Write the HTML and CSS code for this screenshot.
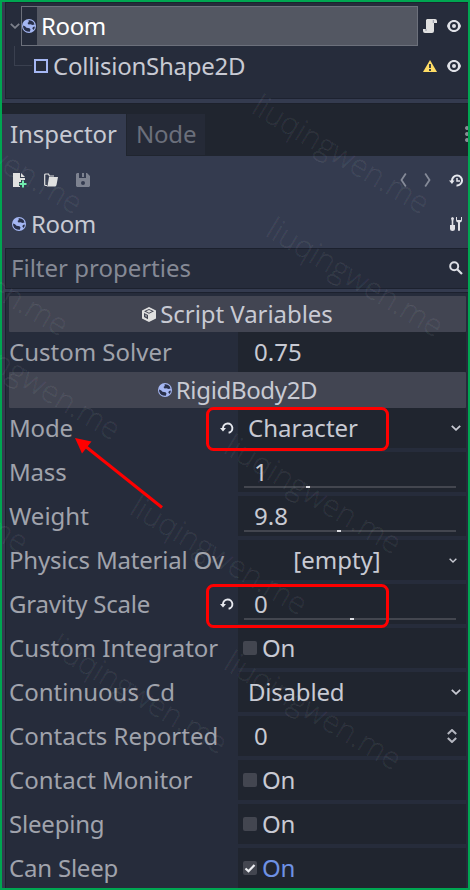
FILE: index.html
```html
<!DOCTYPE html>
<html lang="en">
<head>
<meta charset="utf-8">
<title>Inspector</title>
<link rel="stylesheet" href="styles.css">
</head>
<body>
<svg class="defs" width="0" height="0">
  <symbol id="body" viewBox="0 0 14 14"><circle cx="7" cy="7" r="7" fill="#a5b7f3"/><path d="M6.500 1.200Q9.500.8 11.500 3L12.600 5.500 10.500 6 8.500 5.200 6.500 5.600 5.500 4 6.800 3ZM1 6.500L3 7.200 4.500 8.800 7.500 9.200 8.500 10.500 7.800 12.800Q2.500 13 1.200 8.500ZM12.900 7.500Q12.800 9.500 11.500 11L10.300 9.600 11 8Z" fill="#29304a"/></symbol>
  <symbol id="eye" viewBox="0 0 14 12"><path fill-rule="evenodd" d="M7 0C3.500 0 1 2.500 0 6c1 3.500 3.500 6 7 6s6-2.500 7-6C13 2.500 10.500 0 7 0ZM7 2a4 4 0 1 1 0 8 4 4 0 0 1 0-8ZM7 4a2 2 0 1 0 0 4 2 2 0 0 0 0-4Z" fill="#e0e2e8"/></symbol>
  <symbol id="chev" viewBox="0 0 10 6"><path d="M.8.8 5 4.800 9.200.8" fill="none" stroke="currentColor" stroke-width="1.800"/></symbol>
  <symbol id="revert" viewBox="0 0 14 14"><path d="M3 8V6.800A4.700 4.700 0 1 1 8.600 11.800" fill="none" stroke="#e6e8ee" stroke-width="1.900"/><path d="M0 7h6L3 10.500Z" fill="#e6e8ee"/></symbol>
</svg>
<div class="window">
  <section class="scene">
    <div class="tree">
      <div class="node">
        <svg class="fold" width="10" height="6"><use href="#chev"/></svg>
        <div class="selected"><span class="iconcell"><svg width="14" height="14"><use href="#body"/></svg></span><span class="nodename">Room</span></div>
        <svg class="script" width="14" height="14" viewBox="0 0 14 14"><path d="M4 0h8a2 2 0 0 1 2 2v2h-3v8a2 2 0 0 1-2 2H2a2 2 0 0 1-2-2v-2h3V1Z" fill="#e0e0e0"/><path d="M3 10v2M10.300 1v3" stroke="#9297a3" stroke-width="1"/></svg>
        <svg class="eye" width="14" height="12"><use href="#eye"/></svg>
      </div>
      <div class="node child">
        <span class="branch"></span>
        <svg class="shape" width="14" height="14" viewBox="0 0 14 14"><path d="M1 1h12v12H1Z" fill="none" stroke="#a5b7f3" stroke-width="2"/></svg>
        <span class="childname">CollisionShape2D</span>
        <svg class="warn" width="14" height="12" viewBox="0 0 14 12"><path d="M7 0 14 12H0Z" fill="#ffdd65"/><path d="M7 4v4M7 9v2" stroke="#293042" stroke-width="1.800"/></svg>
        <svg class="eye" width="14" height="12"><use href="#eye"/></svg>
      </div>
    </div>
  </section>

  <nav class="tabs">
    <span class="tab active">Inspector</span><span class="tab">Node</span>
    <svg class="dots" width="3" height="16" viewBox="0 0 3 16"><path d="M0 2a2 2 0 0 1 3-1.700v3.400A2 2 0 0 1 0 2M0 8a2 2 0 0 1 3-1.700v3.400A2 2 0 0 1 0 8M0 14a2 2 0 0 1 3-1.700v3.400A2 2 0 0 1 0 14" fill="#888c96"/></svg>
  </nav>

  <section class="inspector">
    <div class="toolbar">
      <svg width="14" height="15" viewBox="0 0 14 15"><path d="M0 0h7v5h5v2H8v2H6v4h1v1H0ZM8 0l4 4H8Z" fill="#e0e0e0"/><path d="M10 7.500v7M6.500 11h7" stroke="#72edb0" stroke-width="2"/></svg>
      <svg class="open" width="14" height="14" viewBox="0 0 14 14"><path d="M3 12.500H1.500Q.7 12.500.7 11.500V2Q.7 1 1.700 1H4.500l1 2H10" fill="none" stroke="#e0e0e0" stroke-width="1.200"/><path d="M5 4H14l-1.500 8q-.3 1.500-2 1.500H2.500q1 0 1.300-2Z" fill="#e0e0e0"/></svg>
      <svg class="save" width="14" height="14" viewBox="0 0 14 14"><path fill-rule="evenodd" d="M1 0h2v5h7V0h1l3 3v10l-1 1H1l-1-1V1ZM7 8a2 2 0 1 0 0 4 2 2 0 0 0 0-4ZM6 0h2v4H6Z" fill="#7d8290"/></svg>
      <span class="spacer"></span>
      <svg class="prev" width="7" height="14" viewBox="0 0 7 14"><path d="M5.800.5 1.500 7l4.300 6.500" fill="none" stroke="#858a98" stroke-width="1.800"/></svg>
      <svg class="next" width="7" height="14" viewBox="0 0 7 14"><path d="M1.200.5 5.500 7l-4.300 6.500" fill="none" stroke="#858a98" stroke-width="1.800"/></svg>
      <svg width="14" height="13" viewBox="0 0 14 13"><path d="M3 8V6.500A5 5 0 1 1 7.500 11.500" fill="none" stroke="#e6e8ee" stroke-width="2"/><path d="M0 6.500h5.500L3 10Z" fill="#e6e8ee"/><path d="M8 4v3h3" fill="none" stroke="#e6e8ee" stroke-width="1.500"/></svg>
    </div>
    <div class="object">
      <svg width="14" height="14"><use href="#body"/></svg><span>Room</span><i class="spacer"></i>
      <svg class="tools" width="12" height="14" viewBox="0 0 12 14"><path d="M2.500 0 4 1 3.300 4v4H5v4q0 2-2.500 2T0 12V8h1.700V4L1 1ZM6 0v3q0 2 2 2.500V13q0 1 1 1t1-1V5.500q2-.5 2-2.500V0h-1v3H7V0Z" fill="#e0e0e6"/></svg>
    </div>
    <div class="filter"><span>Filter properties</span><svg width="14" height="14" viewBox="0 0 14 14"><circle cx="5.200" cy="5.200" r="4" fill="none" stroke="#dcdee4" stroke-width="2"/><path d="m8 8 5 5" stroke="#dcdee4" stroke-width="2.200"/></svg></div>
    <div class="properties">
      <h2><svg width="14" height="15" viewBox="0 0 14 15"><path d="M7 0 14 3.500v8L7 15 0 11.500v-8Z" fill="#e0e0e0"/><path d="M2 4.300 7 6.800l5-2.500L7 2Z" fill="#424552"/><path d="M4 4.300 7 3l3 1.300-3 1.400Z" fill="#e0e0e0"/><path d="M2 6v4l4 2.200V8Z" fill="#424552"/><path d="M3.200 7.500v1.800l1.600.9V8.300Z" fill="#9fa1a8"/></svg>Script Variables</h2>
      <div class="row"><label>Custom Solver</label><div class="value num">0.75</div></div>
      <h2 class="tight"><svg width="14" height="14"><use href="#body"/></svg>RigidBody2D</h2>
      <div class="grid">
        <div class="row"><label class="tight">Mode</label><svg class="revert" width="14" height="14"><use href="#revert"/></svg><div class="value pick">Character<svg width="10" height="6"><use href="#chev"/></svg></div></div>
        <div class="row"><label class="tight">Mass</label><div class="value num">1<div class="slider"><i style="margin-left:62px"></i></div></div></div>
        <div class="row"><label>Weight</label><div class="value num">9.8<div class="slider"><i style="margin-left:93px"></i></div></div></div>
        <div class="row"><label class="tight">Physics Material Ov</label><div class="value resource"><span>[empty]</span><svg width="8" height="5"><use href="#chev"/></svg></div></div>
        <div class="row"><label class="tight">Gravity Scale</label><svg class="revert" width="14" height="14"><use href="#revert"/></svg><div class="value num">0<div class="slider"><i style="margin-left:106px"></i></div></div></div>
        <div class="row"><label>Custom Integrator</label><div class="value check"><b></b>On</div></div>
        <div class="row"><label>Continuous Cd</label><div class="value pick tight">Disabled<svg width="10" height="6"><use href="#chev"/></svg></div></div>
        <div class="row"><label>Contacts Reported</label><div class="value num spin">0<svg width="10" height="14" viewBox="0 0 10 14"><path d="m.8 5 4.200-4 4.200 4M.8 9 5 13l4.200-4" fill="none" stroke="#b4b7c0" stroke-width="2"/></svg></div></div>
        <div class="row"><label>Contact Monitor</label><div class="value check"><b></b>On</div></div>
        <div class="row"><label class="tight">Sleeping</label><div class="value check"><b></b>On</div></div>
        <div class="row"><label class="tight">Can Sleep</label><div class="value check on"><b><svg width="14" height="14" viewBox="0 0 14 14"><path d="m2.500 7.500 3 2.700L11.500 4" fill="none" stroke="#eceef2" stroke-width="2.200"/></svg></b>On</div></div>
      </div>
    </div>
  </section>
</div>
<svg class="overlay" width="470" height="890" viewBox="0 0 470 890">
  <g class="watermark">
    <text transform="translate(250 112) rotate(31)">liuqingwen.me</text>
    <text transform="translate(264 235) rotate(31)">liuqingwen.me</text>
    <text transform="translate(-97 112) rotate(31)">liuqingwen.me</text>
    <text transform="translate(-111 234) rotate(31)">liuqingwen.me</text>
    <text transform="translate(-59 338) rotate(31)">liuqingwen.me</text>
    <text transform="translate(-151 451) rotate(31)">liuqingwen.me</text>
    <text transform="translate(128 513) rotate(31)">liuqingwen.me</text>
    <text transform="translate(222 452) rotate(31)">liuqingwen.me</text>
    <text transform="translate(48 652) rotate(31)">liuqingwen.me</text>
    <text transform="translate(222 668) rotate(31)">liuqingwen.me</text>
  </g>
  <g class="marks">
    <rect x="207.500" y="408.500" width="180" height="41" rx="6"/>
    <rect x="207.500" y="585.500" width="180" height="41" rx="6"/>
    <path d="M162 507.500 85 446"/>
    <path class="head" d="m75 438 16.500 3.500-9.500 12Z"/>
  </g>
</svg>
</body>
</html>
```
FILE: styles.css
```css
* { box-sizing: border-box; }
body { margin: 0; background: #343b4f; color: #c8cad3; font: 24px/40px "Noto Sans", sans-serif; }
svg { display: block; flex: none; }
.defs { position: absolute; }
.window { width: 470px; height: 890px; border: 2px solid #00a651; overflow: hidden; display: flex; flex-direction: column; }
.tight { letter-spacing: -.2px; }

.scene { height: 102px; padding: 0 0 4px 3px; background: #343b4f; border-bottom: 1px solid #1d212c; }
.tree { height: 97px; padding-top: 3px; background: #262c3b; border: solid #1d2230; border-width: 1px 0 1px 1px; }
.node { height: 40px; display: flex; align-items: center; }
.fold { margin-left: 4px; color: #7d818c; }
.selected { width: 397px; height: 40px; margin-left: 1px; border: 1px solid #6c707b; background: #535762; display: flex; line-height: 38px; color: #fff; letter-spacing: -.4px; }
.iconcell { width: 15px; background: #262c3b; display: flex; align-items: center; }
.nodename { margin-left: 4px; }
.script { margin-left: 5px; }
.node .eye { margin-left: 10px; }
.branch { width: 18px; height: 20px; margin: -20px 0 0 8px; border: solid #3a404f; border-width: 0 0 1px 1px; }
.shape { margin-left: 2px; }
.childname { margin-left: 5px; width: 370px; letter-spacing: -.25px; }
.child .eye { margin-left: 10px; }

.tabs { height: 52px; flex: none; padding-top: 10px; background: #20252f; display: flex; }
.tab { width: 78px; height: 41px; margin-left: 1px; padding-left: 9px; background: #252a37; color: #6b6f7b; line-height: 40px; letter-spacing: -.2px; }
.tab.active { width: 124px; height: 42px; margin-left: 0; padding-left: 8px; background: #343b4f; color: #c8cad3; letter-spacing: -.05px; }
.dots { margin: 12px 0 0 auto; }

.inspector { flex: 1; min-height: 0; }
.spacer { flex: 1; }
.toolbar { height: 48px; padding: 0 5px 0 11px; display: flex; align-items: center; }
.open { margin-left: 17px; }
.save { margin-left: 18px; }
.prev { margin-right: 17px; }
.next { margin-right: 18px; }
.object { height: 40px; padding: 0 6px 0 10px; display: flex; align-items: center; }
.object span { margin-left: 5px; letter-spacing: -.4px; }
.filter { height: 41px; margin: 4px 0 3px 3px; padding: 0 5px 2px 5px; background: #262c3b; border: solid #1c212e; border-width: 1px 0 1px 1px; display: flex; align-items: center; justify-content: space-between; color: #858995; }
.properties { height: 600px; margin-left: 3px; padding: 3px 2px 0 3px; background: #262c3b; border: solid #1c212e; border-width: 1px 0 0 1px; }
h2 { height: 36px; margin: 0; background: #424552; border-radius: 1px; font: 24px/36px "Noto Sans", sans-serif; letter-spacing: -.05px; display: flex; align-items: center; justify-content: center; gap: 4px; }
h2.tight { letter-spacing: -.34px; }
.row { height: 40px; display: flex; align-items: center; color: #a0a3ac; }
.row label { width: 218px; white-space: nowrap; overflow: hidden; }
.grid { display: grid; gap: 4px; }
.value { width: 228px; height: 40px; margin-left: auto; background: #20252f; color: #c8cad3; display: flex; align-items: center; position: relative; }
.revert { margin-left: -7px; }
.num { padding-left: 16px; }
.pick { padding: 0 5px 0 10px; justify-content: space-between; }
.resource { padding-right: 9px; }
.resource span { flex: 1; text-align: center; padding-right: 13px; }
.slider { position: absolute; left: 6px; bottom: 4px; width: 212px; height: 2px; background: #43464f; }
.slider i { display: block; width: 4px; height: 2px; background: #dcdde2; }
.spin { justify-content: space-between; padding-right: 9px; }
.check { padding-left: 5px; gap: 5px; letter-spacing: -.3px; }
.check b { width: 14px; height: 14px; border-radius: 2px; background: #434650; }
.check.on { color: #6f92e4; }

.overlay { position: absolute; left: 0; top: 0; }
.watermark { fill: #fff; fill-opacity: .06; stroke: #fff; stroke-opacity: .035; stroke-width: .9; font: 300 30.7px "Open Sans", sans-serif; }
.marks { fill: none; stroke: #f00; stroke-width: 3; }
.marks .head { fill: #f00; stroke: none; }
```
